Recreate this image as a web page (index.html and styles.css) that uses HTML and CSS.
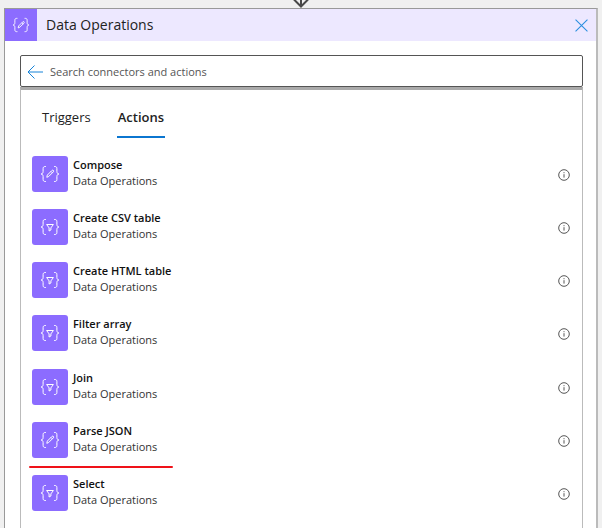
FILE: index.html
```html
<!DOCTYPE html>
<html lang="en">
<head>
<meta charset="utf-8">
<title>Data Operations</title>
<link rel="stylesheet" href="styles.css">
</head>
<body>
<svg class="symbols" aria-hidden="true">
  <symbol id="braces" viewBox="0 0 36 36">
    <path d="M14 10.5h-.8c-1.400 0-2.100.7-2.100 2.100v2.900c0 1.400-.6 2.300-2 2.500 1.400.2 2 1.100 2 2.500v2.900c0 1.400.7 2.100 2.100 2.100h.8M22 10.500h.8c1.400 0 2.100.7 2.100 2.100v2.900c0 1.400.6 2.300 2 2.500-1.400.2-2 1.100-2 2.500v2.900c0 1.400-.7 2.100-2.100 2.100H22"/>
  </symbol>
  <symbol id="pencil" viewBox="0 0 36 36">
    <use href="#braces"/>
    <path d="M14.800 21.300l.5-2.200 4.600-4.600c.5-.5 1.100-.5 1.500-.1.400.4.4 1-.1 1.500l-4.600 4.600zM19 15.400l1.500 1.500"/>
  </symbol>
  <symbol id="filter" viewBox="0 0 36 36">
    <use href="#braces"/>
    <path d="M14.600 15.500h6.800l-2.500 3.400v2.100l-1.800 1v-3.100z"/>
  </symbol>
  <symbol id="info" viewBox="0 0 12 12">
    <circle cx="6" cy="6" r="5.300"/>
    <path d="M6 5.200v3.400M6 3.200v1"/>
  </symbol>
</svg>
<svg class="connector" viewBox="0 0 18 8" aria-hidden="true"><path d="M9 0v6.500M2 -.5l7 7 7-7"/></svg>
<main class="card">
  <header class="card-header">
    <span class="badge"><svg viewBox="0 0 36 36" aria-hidden="true"><use href="#pencil"/></svg></span>
    <h1>Data Operations</h1>
    <button class="close" aria-label="Close"><svg viewBox="0 0 12 12" aria-hidden="true"><path d="M.5.5l11 11M11.500.5l-11 11"/></svg></button>
  </header>
  <div class="content">
    <div class="search">
      <button class="back" aria-label="Back"><svg viewBox="0 0 16 14" aria-hidden="true"><path d="M16 7H1M7.500.5L1 7l6.500 6.500"/></svg></button>
      <input type="text" aria-label="Search connectors and actions" placeholder="Search connectors and actions">
    </div>
    <section class="panel">
      <div class="tabs" role="tablist">
        <button class="tab" role="tab" aria-selected="false">Triggers</button>
        <button class="tab selected" role="tab" aria-selected="true">Actions</button>
      </div>
      <ul class="actions">
        <li class="action"><span class="tile"><svg viewBox="0 0 36 36" aria-hidden="true"><use href="#pencil"/></svg></span><div class="text"><strong>Compose</strong><span>Data Operations</span></div><button class="info" aria-label="About Compose"><svg aria-hidden="true"><use href="#info"/></svg></button></li>
        <li class="action"><span class="tile"><svg viewBox="0 0 36 36" aria-hidden="true"><use href="#filter"/></svg></span><div class="text"><strong>Create CSV table</strong><span>Data Operations</span></div><button class="info" aria-label="About Create CSV table"><svg aria-hidden="true"><use href="#info"/></svg></button></li>
        <li class="action"><span class="tile"><svg viewBox="0 0 36 36" aria-hidden="true"><use href="#filter"/></svg></span><div class="text"><strong>Create HTML table</strong><span>Data Operations</span></div><button class="info" aria-label="About Create HTML table"><svg aria-hidden="true"><use href="#info"/></svg></button></li>
        <li class="action"><span class="tile"><svg viewBox="0 0 36 36" aria-hidden="true"><use href="#filter"/></svg></span><div class="text"><strong>Filter array</strong><span>Data Operations</span></div><button class="info" aria-label="About Filter array"><svg aria-hidden="true"><use href="#info"/></svg></button></li>
        <li class="action"><span class="tile"><svg viewBox="0 0 36 36" aria-hidden="true"><use href="#filter"/></svg></span><div class="text"><strong>Join</strong><span>Data Operations</span></div><button class="info" aria-label="About Join"><svg aria-hidden="true"><use href="#info"/></svg></button></li>
        <li class="action marked"><span class="tile"><svg viewBox="0 0 36 36" aria-hidden="true"><use href="#pencil"/></svg></span><div class="text"><strong>Parse JSON</strong><span>Data Operations</span></div><button class="info" aria-label="About Parse JSON"><svg aria-hidden="true"><use href="#info"/></svg></button></li>
        <li class="action"><span class="tile"><svg viewBox="0 0 36 36" aria-hidden="true"><use href="#filter"/></svg></span><div class="text"><strong>Select</strong><span>Data Operations</span></div><button class="info" aria-label="About Select"><svg aria-hidden="true"><use href="#info"/></svg></button></li>
      </ul>
    </section>
  </div>
</main>
</body>
</html>
```
FILE: styles.css
```css
* {
  box-sizing: border-box;
}

body {
  display: flex;
  flex-direction: column;
  min-height: 100vh;
  margin: 0;
  padding: 0 4px;
  background: #f0f0f0;
  color: #222;
  font-family: "Open Sans", "Noto Sans", sans-serif;
  font-size: 12px;
  line-height: 16px;
}

button {
  padding: 0;
  border: 0;
  background: none;
  color: inherit;
  font: inherit;
}

svg {
  display: block;
  fill: none;
  stroke: currentColor;
}

.symbols {
  position: absolute;
  width: 0;
  height: 0;
}

.connector {
  align-self: center;
  width: 18px;
  height: 8px;
  color: #484848;
  stroke-width: 2;
}

.card {
  display: flex;
  flex: 1;
  flex-direction: column;
  border: 1px solid #999;
  border-right: 2px solid #bbb;
  border-bottom: 0;
  background: #fff;
}

.card-header {
  display: flex;
  align-items: center;
  height: 32px;
  padding-right: 8px;
  background: #ede8ff;
}

.badge {
  width: 32px;
  height: 32px;
  background: #8c6cff;
  color: #fff;
}

.card-header h1 {
  flex: 1;
  margin: 0 0 0 9px;
  font-size: 14px;
  font-weight: 400;
}

.close {
  color: #2b8fe0;
}

.close svg {
  width: 13px;
  height: 13px;
}

.content {
  display: flex;
  flex: 1;
  flex-direction: column;
  padding: 14px 13px 0 15px;
}

.search {
  display: flex;
  align-items: center;
  gap: 7px;
  height: 32px;
  padding: 1px 6px 0;
  border: 1px solid #555;
  border-radius: 2px;
}

.back {
  color: #1683d8;
}

.back svg {
  width: 16px;
  height: 14px;
}

.search input {
  flex: 1;
  min-width: 0;
  padding: 0;
  border: 0;
  outline: 0;
  background: none;
  color: #555;
  font: inherit;
  font-size: 11px;
}

.search input::placeholder {
  color: #555;
}

.panel {
  flex: 1;
  padding: 14px 12px 0 11px;
  border: 1px solid #bbb;
  border-top: 3px solid #aaa;
  border-bottom: 0;
}

.tabs {
  display: flex;
  gap: 26px;
  padding-left: 10px;
}

.tab {
  height: 34px;
  padding-bottom: 6px;
  border-bottom: 2px solid transparent;
  font-size: 13px;
}

.tab.selected {
  padding-right: 1px;
  padding-left: 1px;
  border-color: #0b76d0;
  font-weight: 600;
}

.actions {
  display: flex;
  flex-direction: column;
  justify-content: space-between;
  min-height: 355px;
  margin: 18px 0 0;
  padding: 0;
  list-style: none;
}

.action {
  position: relative;
  display: flex;
  gap: 5px;
  height: 36px;
}

.tile {
  width: 36px;
  height: 36px;
  border-radius: 3px;
  background: #8c6cff;
  color: #fff;
}

.text {
  display: flex;
  flex: 1;
  flex-direction: column;
  padding-top: 1px;
}

.text strong {
  color: #111;
  font-size: 11px;
  font-weight: 600;
}

.text span {
  color: #333;
  font-size: 11px;
}

.info {
  align-self: center;
  padding-top: 2px;
  color: #555;
}

.info svg {
  width: 12px;
  height: 12px;
}

.marked::after {
  position: absolute;
  bottom: -10px;
  left: -3px;
  width: 144px;
  height: 2px;
  border-radius: 1px;
  background: #ef1219;
  content: "";
}
```
